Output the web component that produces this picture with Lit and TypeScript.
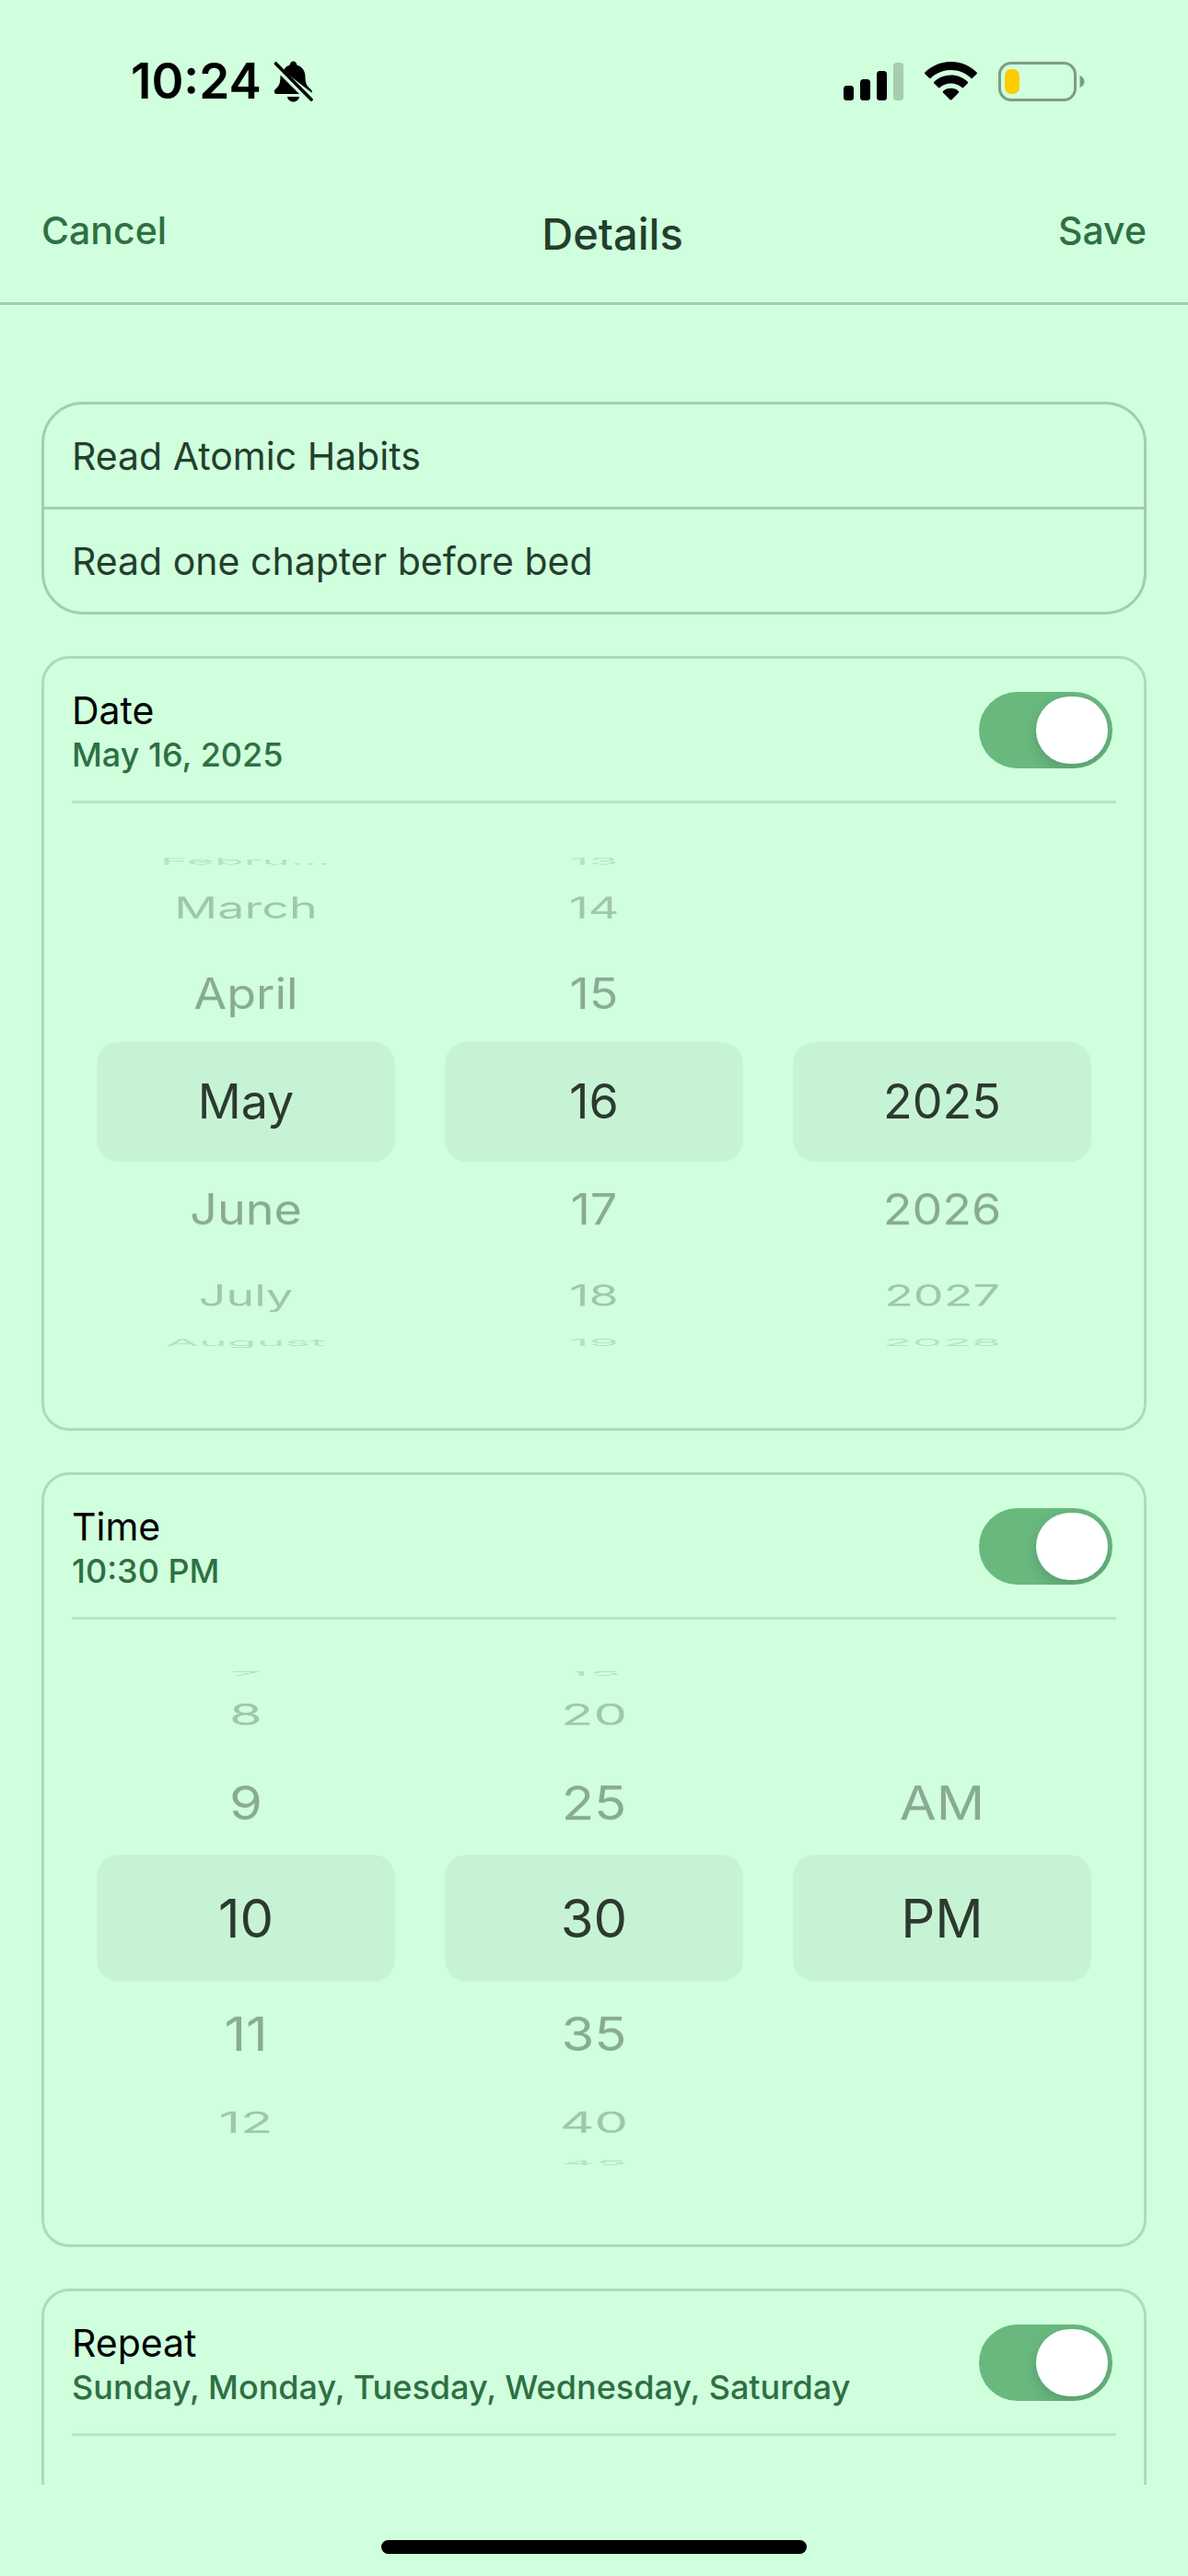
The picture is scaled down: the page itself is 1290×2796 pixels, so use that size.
import { LitElement, html, css, svg } from "lit";
import { customElement, property } from "lit/decorators.js";

const WHEEL_REACH = 3;

interface Column {
  label: string;
  values: string[];
  selected: number;
}

const DATE_COLUMNS: Column[] = [
  { label: "Month", values: ["Febru...", "March", "April", "May", "June", "July", "August"], selected: 3 },
  { label: "Day", values: ["13", "14", "15", "16", "17", "18", "19"], selected: 3 },
  { label: "Year", values: ["2025", "2026", "2027", "2028"], selected: 0 },
];

const TIME_COLUMNS: Column[] = [
  { label: "Hour", values: ["7", "8", "9", "10", "11", "12"], selected: 3 },
  { label: "Minute", values: ["15", "20", "25", "30", "35", "40", "45"], selected: 3 },
  { label: "Period", values: ["AM", "PM"], selected: 1 },
];

@customElement("wheel-column")
export class WheelColumn extends LitElement {
  @property({ attribute: false }) column!: Column;

  static styles = css`
    :host {
      display: grid;
      flex: 1;
      min-width: 0;
      place-items: center stretch;
      padding: 0 27px;
    }
    .wheel {
      display: grid;
      align-items: center;
      border-radius: 24px;
      background: var(--band);
      height: var(--row-height);
    }
    /* Rows sit on the surface of a cylinder seen from the front. */
    .row {
      grid-area: 1 / 1;
      text-align: center;
      white-space: nowrap;
      font-size: var(--wheel-size);
      line-height: 72px;
      color: var(--wheel-ink);
      transform: rotateX(calc(var(--offset) * var(--step) * -1)) translateZ(267px);
    }
    .d1 { opacity: 0.43; }
    .d2 { opacity: 0.29; }
    .d3 { opacity: 0.15; }
  `;

  render() {
    const { label, values, selected } = this.column;
    return html`
      <div class="wheel" role="listbox" aria-label=${label} tabindex="0">
        ${values.map((value, i) => {
          const offset = i - selected;
          if (Math.abs(offset) > WHEEL_REACH) return null;
          return html`<div
            class="row d${Math.abs(offset)}"
            role="option"
            aria-selected=${offset === 0 ? "true" : "false"}
            style="--offset:${offset}"
          >${value}</div>`;
        })}
      </div>
    `;
  }
}

@customElement("toggle-card")
export class ToggleCard extends LitElement {
  @property() heading = "";
  @property() detail = "";

  static styles = css`
    :host {
      display: block;
      box-sizing: border-box;
      border: 3px solid var(--card-line);
      border-radius: 30px;
      padding: 0 30px;
    }
    .head {
      display: flex;
      align-items: center;
      justify-content: space-between;
      height: 154px;
      border-bottom: 3px solid var(--soft-line);
    }
    .text {
      display: flex;
      flex-direction: column;
      padding-top: 4px;
    }
    .heading {
      font-size: 41px;
      line-height: 50px;
      color: #000;
    }
    .detail {
      font-size: 36px;
      line-height: 46px;
      font-weight: 500;
      color: var(--accent-ink);
    }
    .switch {
      appearance: none;
      display: flex;
      align-items: center;
      justify-content: flex-end;
      box-sizing: border-box;
      width: 145px;
      height: 83px;
      margin: 0 4px 0 0;
      padding: 0 5px;
      border-radius: 42px;
      background: var(--accent);
      overflow: hidden;
    }
    .switch::before {
      content: "";
      width: 78px;
      height: 73px;
      border-radius: 39px;
      background: #fff;
      box-shadow: 0 6px 16px rgba(0, 0, 0, 0.16);
    }
    .switch:not(:checked) {
      justify-content: flex-start;
      background: var(--card-line);
    }
  `;

  render() {
    return html`
      <div class="head">
        <label class="text" for="toggle">
          <span class="heading">${this.heading}</span>
          <span class="detail">${this.detail}</span>
        </label>
        <input class="switch" id="toggle" type="checkbox" role="switch" checked />
      </div>
      <slot></slot>
    `;
  }
}

const bell = svg`
  <path d="M12 12C13 8.500 15.500 6.500 18.500 5.800C19 3.200 20.400 1.500 22.500 1.500C24.600 1.500 26 3.200 26.500 5.800C32.500 7.500 35.500 12.500 35.500 19C35.500 26 37.500 28.500 41.500 32C42.800 33.200 43 34.500 42.600 35.700Z"/>
  <path d="M8.500 16.500L29 37H5.200C1.500 37 .8 33.800 3.200 31.700C7.500 28 8.500 25 8.500 16.500Z"/>
  <path d="M16 40H29C28.500 43.200 26 45.500 22.500 45.500C19 45.500 16.500 43.200 16 40Z"/>
  <path d="M3.500 4L42 43" fill="none" stroke="#000" stroke-width="3.600" stroke-linecap="round"/>
`;

@customElement("app-root")
export class AppRoot extends LitElement {
  static styles = css`
    :host {
      --page: #d0ffde;
      --line: #a3ccb0;
      --card-line: #afd9bb;
      --soft-line: #b9e5c6;
      --band: #c7f3d5;
      --accent: #69b97f;
      --accent-ink: #2e7042;
      --ink: #233f2c;
      --wheel-ink: #2c3a30;
      display: block;
      background: var(--page);
      color: var(--ink);
      font-family: Inter, "Liberation Sans", sans-serif;
    }
    .screen {
      display: flex;
      flex-direction: column;
      height: 100vh;
      overflow: hidden;
    }
    .status {
      display: flex;
      align-items: center;
      justify-content: space-between;
      flex: none;
      height: 176px;
      padding: 0 112px 0 142px;
      box-sizing: border-box;
    }
    .clock {
      display: flex;
      align-items: center;
      gap: 12px;
      font-size: 53px;
      line-height: 64px;
      font-weight: 600;
      color: #000;
    }
    .signals {
      display: flex;
      align-items: center;
      gap: 23px;
    }
    .nav {
      display: flex;
      align-items: center;
      justify-content: space-between;
      flex: none;
      height: 155px;
      box-sizing: border-box;
      padding: 0 45px;
      border-bottom: 3px solid var(--line);
    }
    .action {
      appearance: none;
      border: 0;
      padding: 0 0 4px;
      background: none;
      font: inherit;
      font-size: 41px;
      line-height: 50px;
      font-weight: 500;
      color: var(--accent-ink);
    }
    .title {
      margin: 0;
      padding-top: 4px;
      font-size: 47px;
      line-height: 56px;
      font-weight: 500;
    }
    .content {
      display: flex;
      flex-direction: column;
      gap: 45px;
      flex: 1;
      min-height: 0;
      padding: 105px 45px 0;
      overflow: hidden;
    }
    .fields {
      flex: none;
      border: 3px solid var(--line);
      border-radius: 45px;
      overflow: hidden;
    }
    .field {
      display: block;
      width: 100%;
      height: 111px;
      box-sizing: border-box;
      border: 0;
      padding: 0 30px;
      background: none;
      font: inherit;
      font-size: 41px;
      color: var(--ink);
      outline: none;
    }
    .field + .field {
      height: 114px;
      border-top: 3px solid var(--line);
    }
    toggle-card {
      flex: none;
    }
    .picker {
      display: flex;
      height: 648px;
      padding-bottom: 30px;
    }
    .date {
      --row-height: 130px;
      --step: 26deg;
      --wheel-size: 52px;
    }
    .time {
      --row-height: 138px;
      --step: 28deg;
      --wheel-size: 58px;
    }
    .days {
      height: 300px;
    }
    .home {
      display: flex;
      justify-content: center;
      flex: none;
      height: 39px;
      padding-top: 60px;
    }
    .pill {
      width: 462px;
      height: 15px;
      border-radius: 8px;
      background: #000;
    }
  `;

  render() {
    return html`
      <div class="screen">
        <div class="status">
          <div class="clock">
            <span>10:24</span>
            <svg width="44" height="47" viewBox="0 0 44 47" aria-label="Silent">${bell}</svg>
          </div>
          <div class="signals">
            <svg width="65" height="41" viewBox="0 0 65 41" aria-label="Signal">
              <rect y="25" width="11" height="16" rx="3.500" />
              <rect x="18" y="18" width="11" height="23" rx="3.500" />
              <rect x="36" y="9" width="11" height="32" rx="3.500" />
              <rect x="54" width="11" height="41" rx="3.500" fill="#a6ccb1" />
            </svg>
            <svg width="57" height="42" viewBox="0 0 57 42" aria-label="Wi-Fi">
              <path d="M28.500 0C39.500 0 49.500 4.300 56.600 11.500C57.100 12 57.100 12.700 56.600 13.200L52 17.800C51.500 18.300 50.800 18.300 50.300 17.800C44.500 12.200 36.900 9 28.500 9C20.100 9 12.500 12.200 6.700 17.800C6.200 18.300 5.500 18.300 5 17.800L.4 13.200C-.1 12.700-.1 12 .4 11.500C7.500 4.300 17.500 0 28.500 0Z" />
              <path d="M28.500 14.500C35.600 14.500 42 17.200 46.700 21.700C47.200 22.200 47.200 22.900 46.700 23.400L42.100 28C41.600 28.500 40.900 28.500 40.400 28C37.200 25.200 33.100 23.500 28.500 23.500C23.900 23.500 19.800 25.200 16.600 28C16.100 28.500 15.400 28.500 14.900 28L10.300 23.400C9.800 22.900 9.800 22.200 10.300 21.700C15 17.200 21.400 14.500 28.500 14.500Z" />
              <path d="M28.500 28.800C31.800 28.800 34.700 30 36.900 32C37.400 32.500 37.400 33.200 36.900 33.700L29.400 41.200C28.900 41.700 28.100 41.700 27.600 41.200L20.100 33.700C19.600 33.200 19.600 32.500 20.100 32C22.300 30 25.200 28.800 28.500 28.800Z" />
            </svg>
            <svg width="94" height="43" viewBox="0 0 94 43" aria-label="Battery low">
              <rect x="1.500" y="1.500" width="82" height="40" rx="12.500" fill="none" stroke="#7d9c86" stroke-width="3" />
              <path d="M88.500 15C91.600 16 93.500 18.500 93.500 21.500C93.500 24.500 91.600 27 88.500 28Z" fill="#7d9c86" />
              <rect x="7" y="8" width="16" height="27" rx="7" fill="#ffcc00" />
            </svg>
          </div>
        </div>

        <header class="nav">
          <button class="action" type="button">Cancel</button>
          <h1 class="title">Details</h1>
          <button class="action" type="button">Save</button>
        </header>

        <main class="content">
          <div class="fields">
            <input class="field" type="text" aria-label="Title" value="Read Atomic Habits" />
            <input class="field" type="text" aria-label="Notes" value="Read one chapter before bed" />
          </div>

          <toggle-card heading="Date" detail="May 16, 2025">
            <div class="picker date">
              ${DATE_COLUMNS.map((c) => html`<wheel-column .column=${c}></wheel-column>`)}
            </div>
          </toggle-card>

          <toggle-card heading="Time" detail="10:30 PM">
            <div class="picker time">
              ${TIME_COLUMNS.map((c) => html`<wheel-column .column=${c}></wheel-column>`)}
            </div>
          </toggle-card>

          <toggle-card heading="Repeat" detail="Sunday, Monday, Tuesday, Wednesday, Saturday">
            <div class="days"></div>
          </toggle-card>
        </main>

        <div class="home"><div class="pill"></div></div>
      </div>
    `;
  }
}
